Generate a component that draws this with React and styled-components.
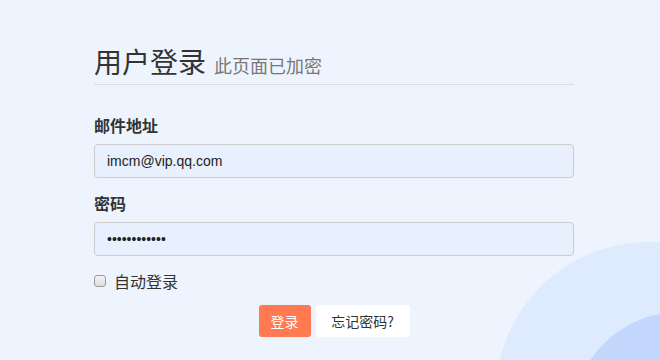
import React, { useState } from 'react';
import styled, { createGlobalStyle } from 'styled-components';

const GlobalStyle = createGlobalStyle`
  html, body {
    margin: 0;
    padding: 0;
    background: #eef4fd;
  }
  body {
    font-family: 'Noto Sans CJK SC', 'Liberation Sans', sans-serif;
    color: #333;
  }
`;

const Page = styled.div`
  position: relative;
  width: 100%;
  height: 360px;
  overflow: hidden;
`;

// decorative circles in the bottom-right corner
const Blob = styled.div`
  position: absolute;
  border-radius: 50%;
  left: ${(p) => p.x - p.r}px;
  top: ${(p) => p.y - p.r}px;
  width: ${(p) => p.r * 2}px;
  height: ${(p) => p.r * 2}px;
  background: ${(p) => p.color};
`;

const Form = styled.form`
  position: relative;
  width: 480px;
  margin: 0 0 0 94px;
  padding-top: 42px;
`;

const Header = styled.div`
  display: flex;
  align-items: baseline;
  gap: 8px;
  padding-bottom: 4px;
  border-bottom: 1px solid #dadde2;
`;

const Title = styled.h1`
  margin: 0;
  font-size: 28px;
  font-weight: 400;
  line-height: 38px;
  color: #333;
`;

const Subtitle = styled.small`
  font-size: 18px;
  color: #777;
`;

const Label = styled.label`
  display: block;
  margin: ${(p) => p.top}px 0 8px;
  font-size: 16px;
  font-weight: 700;
  line-height: 22px;
  color: #333;
`;

const Input = styled.input`
  box-sizing: border-box;
  display: block;
  width: 100%;
  height: 34px;
  padding: 0 12px;
  border: 1px solid #ccc;
  border-radius: 4px;
  background: #e8f0fe;
  font-family: 'Liberation Sans', Arial, sans-serif;
  font-size: 14px;
  color: #222;
  outline: none;
`;

const CheckRow = styled.label`
  display: flex;
  align-items: center;
  gap: 8px;
  margin-top: 14px;
  font-size: 16px;
  line-height: 22px;
  color: #333;
`;

const Check = styled.input`
  appearance: none;
  box-sizing: border-box;
  margin: 0;
  width: 12px;
  height: 12px;
  border: 1px solid #9a9a9a;
  border-radius: 3px;
  background: linear-gradient(#f4f4f4, #dcdcdc);
`;

const Actions = styled.div`
  display: flex;
  justify-content: center;
  gap: 5px;
  margin-top: 13px;
`;

const Button = styled.button`
  box-sizing: border-box;
  width: ${(p) => p.w}px;
  height: 32px;
  padding: 0;
  border: none;
  border-radius: 3px;
  background: ${(p) => (p.primary ? '#ff7a50' : '#fff')};
  color: ${(p) => (p.primary ? '#fff' : '#333')};
  font-family: 'Noto Sans CJK SC', sans-serif;
  font-size: 14px;
  cursor: pointer;
`;

export default function App() {
  const [email, setEmail] = useState('imcm@vip.qq.com');
  const [pwd, setPwd] = useState('123456789012');

  return (
    <Page>
      <GlobalStyle />
      <Blob x={648} y={394} r={152} color="#deebfe" />
      <Blob x={680} y={420} r={108} color="#c3d7fd" />
      <Form onSubmit={(e) => e.preventDefault()}>
        <Header>
          <Title>用户登录</Title>
          <Subtitle>此页面已加密</Subtitle>
        </Header>
        <Label top={29}>邮件地址</Label>
        <Input value={email} onChange={(e) => setEmail(e.target.value)} />
        <Label top={14}>密码</Label>
        <Input type="password" value={pwd} onChange={(e) => setPwd(e.target.value)} />
        <CheckRow>
          <Check type="checkbox" />
          自动登录
        </CheckRow>
        <Actions>
          <Button primary w={52} type="submit">登录</Button>
          <Button w={94} type="button">忘记密码?</Button>
        </Actions>
      </Form>
    </Page>
  );
}
